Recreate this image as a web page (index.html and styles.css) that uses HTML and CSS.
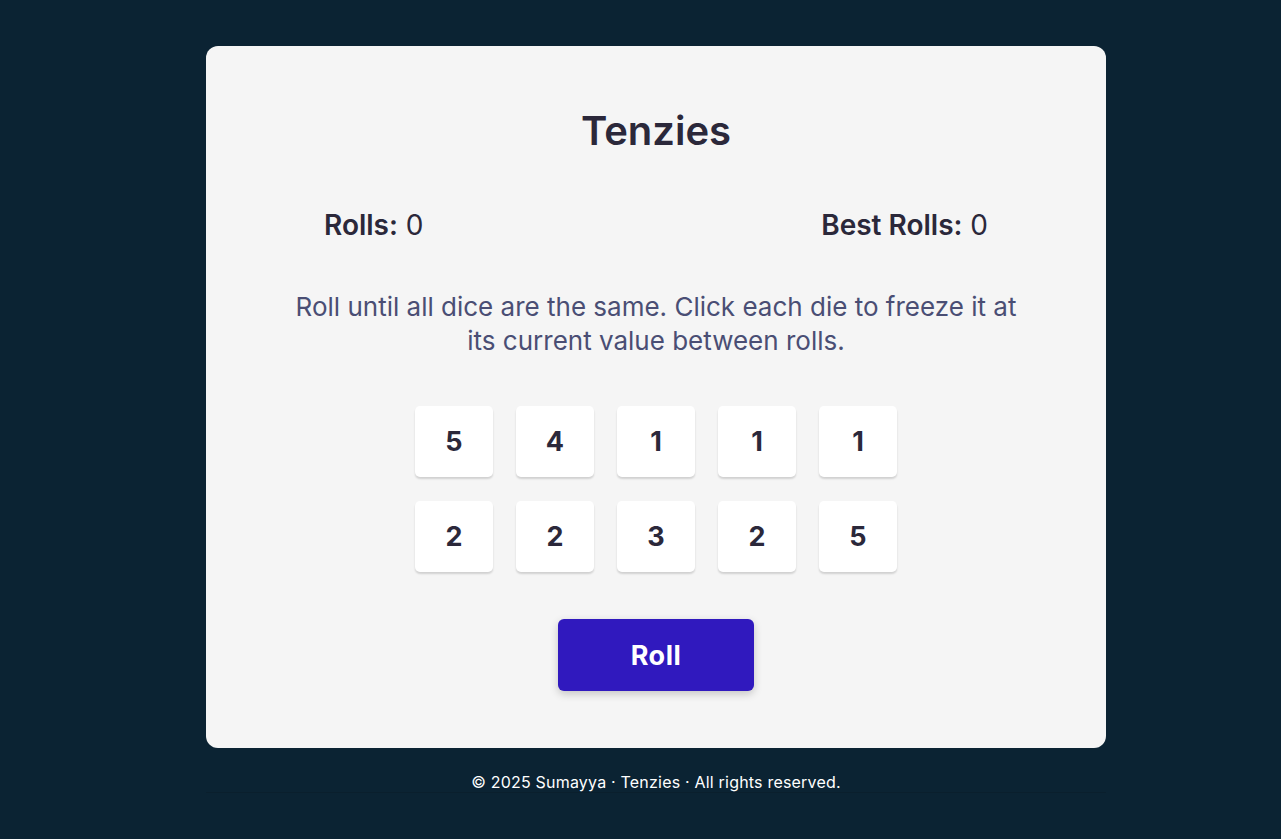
FILE: index.html
```html
<!DOCTYPE html>
<html lang="en">
<head>
<meta charset="utf-8">
<title>Tenzies</title>
<link rel="stylesheet" href="styles.css">
</head>
<body>
<div class="page">
  <main class="card">
    <h1 class="title">Tenzies</h1>
    <div class="stats">
      <div class="stat"><strong>Rolls:</strong> 0</div>
      <div class="stat"><strong>Best Rolls:</strong> 0</div>
    </div>
    <p class="instructions">Roll until all dice are the same. Click each die to freeze it at its current value between rolls.</p>
    <div class="dice">
      <button class="die">5</button>
      <button class="die">4</button>
      <button class="die">1</button>
      <button class="die">1</button>
      <button class="die">1</button>
      <button class="die">2</button>
      <button class="die">2</button>
      <button class="die">3</button>
      <button class="die">2</button>
      <button class="die">5</button>
    </div>
    <button class="roll">Roll</button>
  </main>
  <footer class="footer">© 2025 Sumayya · Tenzies · All rights reserved.</footer>
</div>
</body>
</html>
```
FILE: styles.css
```css
html, body {
  margin: 0;
  padding: 0;
}
body {
  background: #0b2333;
  font-family: Inter, "Noto Sans", sans-serif;
  color: #2b283a;
  min-height: 839px;
}
.page {
  width: 900px;
  margin-left: 206px;
  padding-top: 46px;
}
.card {
  background: #f5f5f5;
  border-radius: 12px;
  padding: 61px 0 57px;
  display: flex;
  flex-direction: column;
  align-items: center;
}
.title {
  margin: 0;
  font-size: 40px;
  line-height: 48px;
  font-weight: 600;
  color: #2b283a;
}
.stats {
  align-self: stretch;
  display: flex;
  justify-content: space-between;
  padding: 0 118px;
  margin-top: 54px;
  font-size: 28px;
  line-height: 32px;
}
.stat strong {
  font-weight: 600;
}
.instructions {
  margin: 49px 0 0;
  max-width: 730px;
  text-align: center;
  font-size: 26px;
  line-height: 34px;
  font-weight: 400;
  color: #4a4e74;
}
.dice {
  margin-top: 48px;
  display: grid;
  grid-template-columns: repeat(5, 78px);
  grid-auto-rows: 71px;
  column-gap: 23px;
  row-gap: 24px;
}
.die {
  border: none;
  background: #fff;
  border-radius: 5px;
  box-shadow: 0 2px 2px rgba(0, 0, 0, 0.15);
  font-family: Inter, sans-serif;
  font-size: 27px;
  font-weight: 700;
  color: #2b283a;
  padding: 0;
}
.roll {
  margin-top: 47px;
  width: 196px;
  height: 72px;
  border: none;
  border-radius: 6px;
  background: #3019be;
  color: #fff;
  font-family: Inter, sans-serif;
  font-size: 27px;
  font-weight: 700;
  letter-spacing: 0.5px;
  box-shadow: 0 3px 8px rgba(0, 0, 0, 0.2);
}
.footer {
  margin-top: 24px;
  height: 20px;
  line-height: 20px;
  text-align: center;
  font-size: 16px;
  letter-spacing: 0.2px;
  color: #ffffff;
  border-bottom: 1px solid #0a1f2d;
}
```
